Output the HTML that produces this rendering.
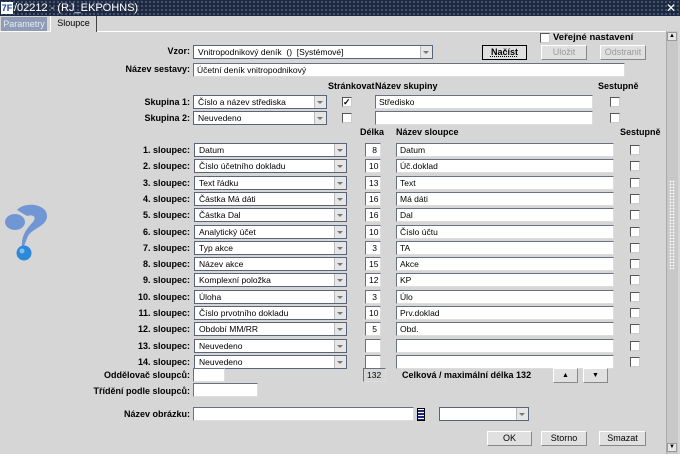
<!DOCTYPE html>
<html><head><meta charset="utf-8"><style>
*{box-sizing:border-box;margin:0;padding:0}
body{width:680px;height:454px;background:#d6d6d6;font-family:"Liberation Sans",Arial,sans-serif;font-size:9px;position:relative;overflow:hidden;color:#000}
.a{position:absolute}
.tb{left:0;top:0;width:680px;height:16px;background:#1c2940;color:#fff;font-size:11px;line-height:16px;
background-image:radial-gradient(#55607a 0.8px,transparent 1px);background-size:4px 4px}
.lb{position:absolute;font-weight:bold;font-size:9px;text-align:right;white-space:nowrap}
.in{position:absolute;height:14px;background:#fff;border:1px solid #6a7080;border-right-color:#ddd;border-bottom-color:#ddd;font-size:8.5px;line-height:12px;padding-left:3px;white-space:nowrap;overflow:hidden}
.sel{position:absolute;height:14px;background:#fff;border:1px solid #5a6478;font-size:8.5px;line-height:12px;padding-left:4px;white-space:nowrap}
.sel:after{content:"";position:absolute;right:0;top:0;width:11px;height:12px;background:#e6e6e6;border-left:1px solid #bbb}
.sel:before{content:"";position:absolute;right:3px;top:5px;border:3px solid transparent;border-top:3px solid #777;z-index:1}
.num{text-align:right;padding-right:3px}
.cb{position:absolute;width:10px;height:10px;background:#fff;border:1px solid #555;border-right-color:#ccc;border-bottom-color:#ccc}
.bt{position:absolute;height:15px;background:#e0e0e0;border:1px solid #888;border-top-color:#fff;border-left-color:#fff;font-size:9px;text-align:center;line-height:13px}
</style></head><body>
<div class="a tb"><span style="display:inline-block;width:12px;height:12px;background:#fff;color:#1a3d9a;font-size:9px;font-weight:bold;line-height:12px;margin:2px 1px 0 1px;vertical-align:top;text-align:center">7F</span>/02212 - (RJ_EKPOHNS)<span style="position:absolute;right:4px;top:0;font-size:12px">✕</span></div>
<div class="a" style="left:0;top:16px;width:680px;height:15px;background:#d6d6d6"></div>
<div class="a" style="left:1px;top:17px;width:46px;height:14px;background:#8e9cb6;color:#e8ecf4;font-size:9px;line-height:14px;text-align:center">Parametry</div>
<div class="a" style="left:50px;top:16px;width:47px;height:16px;background:#d6d6d6;border-left:1px solid #fff;border-right:1px solid #444;font-size:9px;line-height:14px;text-align:center">Sloupce</div>
<div class="a" style="left:0;top:31px;width:50px;height:1px;background:#fff"></div><div class="a" style="left:97px;top:31px;width:570px;height:1px;background:#fff"></div>
<div class="a" style="left:666px;top:31px;width:12px;height:423px;background:#c8c8c8;border-left:1px solid #aaa"></div>
<div class="a" style="left:667px;top:32px;width:10px;height:9px;background:#e6e6e6;border:1px solid #999;font-size:6px;text-align:center;line-height:7px">▲</div>
<div class="a" style="left:667px;top:443px;width:10px;height:9px;background:#e6e6e6;border:1px solid #999;font-size:6px;text-align:center;line-height:7px">▼</div>
<div class="a" style="left:669px;top:180px;width:6px;height:90px;background-image:radial-gradient(#fff 0.7px,transparent 1px);background-size:3px 3px"></div>
<svg class="a" style="left:3px;top:202px" width="46" height="62"><path d="M14 8 C22 -1 44 2 44 14 C44 24 30 26 25 34 L21 44 L19 44 C18 34 24 26 30 20 C34 15 30 12 24 14 Z" fill="#7196d4"/><ellipse cx="12" cy="20" rx="10" ry="8" fill="#7196d4"/><circle cx="21" cy="51" r="7.5" fill="#2c88d8"/><circle cx="19" cy="49" r="2.5" fill="#7cc0f0"/></svg>
<div class="cb" style="left:540px;top:33px"></div><div class="lb" style="left:553px;top:32px;font-size:9.5px">Veřejné nastavení</div>
<div class="lb" style="left:150px;top:46px;width:40px">Vzor:</div>
<div class="sel" style="left:193px;top:45px;width:240px">Vnitropodnikový deník &nbsp;() &nbsp;[Systémové]</div>
<div class="bt" style="left:482px;top:45px;width:45px;border:1px solid #000;font-weight:bold;text-decoration:underline dotted">Načíst</div>
<div class="bt" style="left:541px;top:45px;width:46px;color:#999">Uložit</div>
<div class="bt" style="left:600px;top:45px;width:46px;color:#999">Odstranit</div>
<div class="lb" style="left:100px;top:64px;width:90px">Název sestavy:</div>
<div class="in" style="left:193px;top:63px;width:432px">Účetní deník vnitropodnikový</div>
<div class="lb" style="left:328px;top:81px">Stránkovat</div><div class="lb" style="left:375px;top:81px">Název skupiny</div><div class="lb" style="left:598px;top:81px">Sestupně</div>
<div class="lb" style="left:120px;top:97px;width:70px">Skupina 1:</div><div class="sel" style="left:193px;top:95px;width:134px">Číslo a název střediska</div>
<div class="cb" style="left:342px;top:97px;font-size:9px;line-height:8px;font-weight:bold">✓</div><div class="in" style="left:375px;top:95px;width:218px">Středisko</div><div class="cb" style="left:610px;top:97px"></div>
<div class="lb" style="left:120px;top:113px;width:70px">Skupina 2:</div><div class="sel" style="left:193px;top:111px;width:134px">Neuvedeno</div>
<div class="cb" style="left:342px;top:113px"></div><div class="in" style="left:375px;top:111px;width:218px"></div><div class="cb" style="left:610px;top:113px"></div>
<div class="lb" style="left:360px;top:127px">Délka</div><div class="lb" style="left:396px;top:127px">Název sloupce</div><div class="lb" style="left:620px;top:127px">Sestupně</div>
<div id="rows"></div>
<script>
var d=[["Datum",8,"Datum"],["Číslo účetního dokladu",10,"Úč.doklad"],["Text řádku",13,"Text"],["Částka Má dáti",16,"Má dáti"],["Částka Dal",16,"Dal"],["Analytický účet",10,"Číslo účtu"],["Typ akce",3,"TA"],["Název akce",15,"Akce"],["Komplexní položka",12,"KP"],["Úloha",3,"Úlo"],["Číslo prvotního dokladu",10,"Prv.doklad"],["Období MM/RR",5,"Obd."],["Neuvedeno","",""],["Neuvedeno","",""]];
var h="";d.forEach(function(r,i){var t=Math.round(143+i*16.3);
h+='<div class="lb" style="left:110px;top:'+(t+2)+'px;width:80px">'+(i+1)+'. sloupec:</div>';
h+='<div class="sel" style="left:194px;top:'+t+'px;width:153px">'+r[0]+'</div>';
h+='<div class="in num" style="left:365px;top:'+t+'px;width:16px">'+r[1]+'</div>';
h+='<div class="in" style="left:396px;top:'+t+'px;width:218px">'+r[2]+'</div>';
h+='<div class="cb" style="left:630px;top:'+(t+2)+'px"></div>';});
document.getElementById("rows").innerHTML=h;
</script>
<div class="lb" style="left:80px;top:370px;width:110px">Oddělovač sloupců:</div><div class="in" style="left:193px;top:368px;width:32px"></div>
<div class="in" style="left:363px;top:368px;width:23px;background:#d6d6d6">132</div>
<div class="lb" style="left:402px;top:370px">Celková / maximální délka 132</div>
<div class="bt" style="left:553px;top:368px;width:25px;font-size:7px">▲</div><div class="bt" style="left:583px;top:368px;width:25px;font-size:7px">▼</div>
<div class="lb" style="left:60px;top:386px;width:130px">Třídění podle sloupců:</div><div class="in" style="left:193px;top:383px;width:65px"></div>
<div class="lb" style="left:80px;top:409px;width:110px">Název obrázku:</div><div class="in" style="left:193px;top:407px;width:221px"></div>
<div class="a" style="left:417px;top:408px;width:8px;height:13px;border:1px solid #000;background:repeating-linear-gradient(#fff 0 1px,#1a2a80 1px 3px)"></div>
<div class="sel" style="left:439px;top:407px;width:90px"></div>
<div class="bt" style="left:487px;top:431px;width:45px">OK</div><div class="bt" style="left:541px;top:431px;width:46px">Storno</div><div class="bt" style="left:599px;top:431px;width:47px">Smazat</div>
</body></html>
